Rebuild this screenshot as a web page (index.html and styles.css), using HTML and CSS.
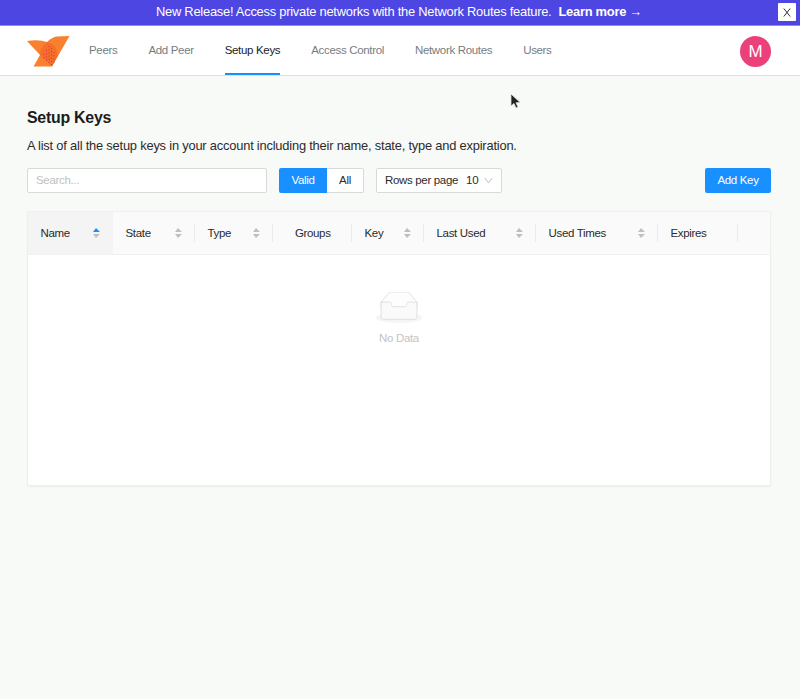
FILE: index.html
```html
<!DOCTYPE html>
<html lang="en">
<head>
<meta charset="utf-8">
<title>Setup Keys</title>
<link rel="stylesheet" href="styles.css">
</head>
<body>
<div class="banner">
  <p class="banner-text">New Release! Access private networks with the Network Routes feature.<b>Learn more <span class="arrow">→</span></b></p>
  <button class="banner-close" aria-label="Close"><svg width="8" height="9" viewBox="0 0 8 9"><path d="M.8.5 7.200 8.500M7.200.5.8 8.500" stroke="#333" fill="none"/></svg></button>
</div>
<header class="header">
  <svg class="logo" width="43" height="31" viewBox="0 0 43 31">
    <path d="M0 5Q12 3 20 6Q25 1 30 .5L42.500 0 25 30.500H6.500L13 19Z" fill="#f8802f"/>
    <path d="M20 6Q30 8 30.500 20L25 30.500 13 19Q14 10 20 6Z" fill="#f46f29"/>
    <path d="M22 10v18M19.500 14v11M24.500 12v18M27 16v11M17 18v5" stroke="#e02a48" stroke-width="1" stroke-dasharray="1 2.200" fill="none"/>
  </svg>
  <nav class="nav">
    <a>Peers</a><a>Add Peer</a><a class="active">Setup Keys</a><a>Access Control</a><a>Network Routes</a><a>Users</a>
  </nav>
  <div class="avatar">M</div>
</header>
<main class="main">
  <h1>Setup Keys</h1>
  <p class="description">A list of all the setup keys in your account including their name, state, type and expiration.</p>
  <div class="toolbar">
    <input class="search" placeholder="Search...">
    <div class="segmented"><span class="selected">Valid</span><span class="choice">All</span></div>
    <div class="select"><span>Rows per page</span><span class="count">10</span><svg width="9" height="7" viewBox="0 0 9 7"><path d="M.8 1 4.500 5.800 8.200 1" stroke="#bdbdbd" fill="none"/></svg></div>
    <button class="add">Add Key</button>
  </div>
  <section class="card">
    <div class="table-head">
      <div class="cell sorted"><span>Name</span><i class="sorter up"></i></div>
      <div class="cell"><span>State</span><i class="sorter"></i></div>
      <div class="cell"><span>Type</span><i class="sorter"></i></div>
      <div class="cell centered"><span>Groups</span></div>
      <div class="cell"><span>Key</span><i class="sorter"></i></div>
      <div class="cell"><span>Last Used</span><i class="sorter"></i></div>
      <div class="cell"><span>Used Times</span><i class="sorter"></i></div>
      <div class="cell"><span>Expires</span></div>
      <div class="cell"></div>
    </div>
    <div class="empty">
      <svg width="50" height="32" viewBox="0 0 64 41">
        <ellipse cx="32" cy="33" rx="30" ry="6.500" fill="#f5f5f5"/>
        <g fill-rule="nonzero" stroke="#d9d9d9"><path d="M55 12.760 44.854 1.258C44.367.474 43.656 0 42.907 0H21.093c-.749 0-1.460.474-1.947 1.257L9 12.761V22h46v-9.240z" fill="#fdfdfd"/><path d="M41.613 15.931c0-1.605.994-2.930 2.227-2.931H55v18.137C55 33.260 53.680 35 52.050 35h-40.100C10.320 35 9 33.259 9 31.137V13h11.160c1.233 0 2.227 1.323 2.227 2.928v.022c0 1.605 1.005 2.901 2.237 2.901h14.752c1.232 0 2.237-1.308 2.237-2.913v-.007z" fill="#fafafa"/></g>
      </svg>
      <p>No Data</p>
    </div>
  </section>
</main>
<svg class="cursor" width="12" height="17" viewBox="0 0 12 17"><path d="M1 1v12l3-2.500 2 4.500 2-1-2-4.200 4.200-.3Z" fill="#222" stroke="#ddd" stroke-width=".8"/></svg>
</body>
</html>
```

FILE: styles.css
```css
* { box-sizing: border-box; }
body {
  margin: 0;
  height: 699px;
  overflow: hidden;
  background: #f8faf8;
  color: #2b2b2b;
  font: 11.500px/17px "Liberation Sans", Arial, sans-serif;
  letter-spacing: -.33px;
}
p, h1 { margin: 0; }
button, input { font: inherit; letter-spacing: inherit; }
.banner {
  position: relative;
  height: 26px;
  background: #4d46e2;
  border-bottom: 1px solid #8f88ef;
  color: #fff;
  font-size: 12.900px;
  letter-spacing: -.25px;
  line-height: 24px;
}
.banner-text { padding-left: 156px; white-space: nowrap; }
.banner-text b { margin-left: 7px; }
.arrow { font-weight: 400; }
.banner-close {
  position: absolute;
  top: 3px;
  right: 4px;
  display: flex;
  align-items: center;
  justify-content: center;
  width: 18px;
  height: 18px;
  padding: 0;
  border: 0;
  border-radius: 1px;
  background: #fff;
}
.header {
  display: flex;
  height: 50px;
  padding: 0 29px 0 27px;
  background: #fff;
  border-bottom: 1px solid #e0e2e0;
}
.logo { margin-top: 10px; flex: none; }
.nav { display: flex; gap: 31px; margin-left: 19px; line-height: 49px; color: #767d82; white-space: nowrap; }
.nav .active { color: #222; border-bottom: 2px solid #1890ff; }
.avatar {
  width: 31px;
  height: 31px;
  margin: 10px 0 0 auto;
  border-radius: 50%;
  background: #eb4079;
  color: #fff;
  font-size: 17px;
  line-height: 32px;
  text-align: center;
}
.main { padding: 32px 29px 0 27px; }
h1 { font-size: 15.900px; letter-spacing: -.24px; line-height: 20px; color: #1c1c1c; }
.description { margin-top: 9px; font-size: 12.900px; letter-spacing: -.21px; line-height: 18px; white-space: nowrap; }
.toolbar { display: flex; height: 25px; margin-top: 13px; line-height: 25px; }
.search { width: 240px; padding: 0 8px; border: 1px solid #d9d9d9; border-radius: 2px; background: #fff; }
.search::placeholder { color: #bfbfbf; }
.segmented { display: flex; margin-left: 12px; text-align: center; }
.selected { width: 48px; background: #1890ff; color: #fff; border-radius: 2px 0 0 2px; }
.choice { width: 37px; background: #fff; border: 1px solid #d9d9d9; border-left: 0; border-radius: 0 2px 2px 0; line-height: 23px; }
.select { display: flex; align-items: center; width: 126px; margin-left: 12px; padding: 0 8px; background: #fff; border: 1px solid #d9d9d9; border-radius: 2px; white-space: nowrap; }
.count { margin-left: 8px; }
.select svg { margin-left: auto; }
.add { width: 66px; margin-left: auto; padding: 0; border: 0; border-radius: 2px; background: #1890ff; color: #fff; }
.card { height: 275px; margin-top: 18px; border: 1px solid #efefef; border-radius: 2px; background: #fff; box-shadow: 0 1px 2px #0000000d; }
.table-head { display: grid; grid-template-columns: 85px 82px 78px 79px 72px 112px 122px 80px 1fr; height: 43px; background: #fafafa; border-bottom: 1px solid #f0f0f0; }
.cell { position: relative; display: flex; align-items: center; justify-content: space-between; padding: 0 12px 0 12.500px; white-space: nowrap; }
.centered { justify-content: center; }
.cell:not(.sorted):not(:nth-last-child(1))::after { content: ""; position: absolute; right: 0; top: 12px; width: 1px; height: 18px; background: #ebebeb; }
.sorted { background: #f4f4f4; }
.sorter { display: flex; flex-direction: column; gap: 2px; margin-right: 1px; }
.sorter::before, .sorter::after { content: ""; border: 3.500px solid transparent; border-left-width: 3px; border-right-width: 4px; }
.sorter::before { border-top: 0; border-bottom: 4px solid #bfbfbf; }
.sorter::after { border-bottom: 0; border-top: 4px solid #bfbfbf; }
.sorter.up::before { border-bottom-color: #1890ff; }
.empty { display: flex; flex-direction: column; align-items: center; padding-top: 37px; color: #c4c4c4; }
.empty p { margin-top: 6px; }
.cursor { position: absolute; left: 510px; top: 93px; }
```
